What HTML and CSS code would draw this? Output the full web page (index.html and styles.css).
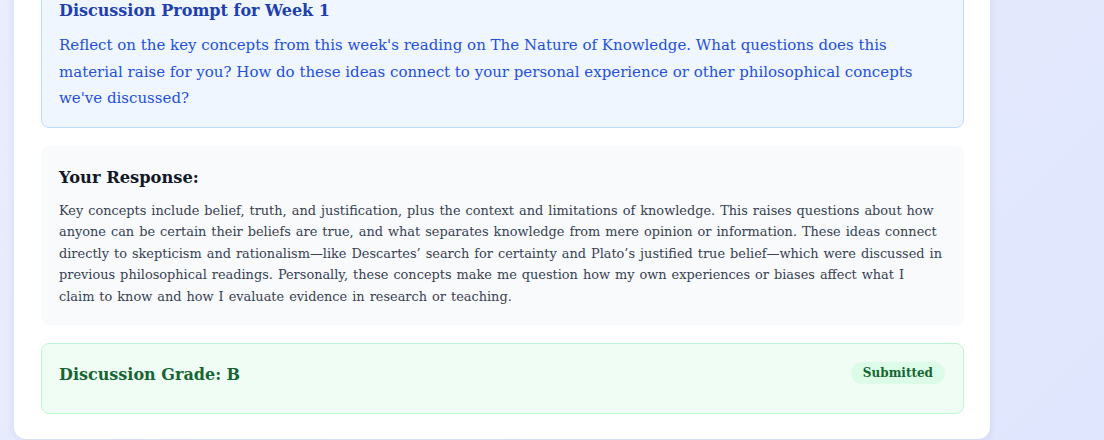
FILE: index.html
```html
<!DOCTYPE html>
<html lang="en">
<head>
<meta charset="utf-8">
<title>Discussion</title>
<link rel="stylesheet" href="styles.css">
</head>
<body>
<div class="page">
  <main class="card">
    <section class="prompt">
      <h2 class="prompt-title">Discussion Prompt for Week 1</h2>
      <p class="prompt-text">Reflect on the key concepts from this week's reading on The Nature of Knowledge. What questions does this material raise for you? How do these ideas connect to your personal experience or other philosophical concepts we've discussed?</p>
    </section>
    <section class="response">
      <h3 class="response-title">Your Response:</h3>
      <p class="response-text">Key concepts include belief, truth, and justification, plus the context and limitations of knowledge. This raises questions about how anyone can be certain their beliefs are true, and what separates knowledge from mere opinion or information. These ideas connect directly to skepticism and rationalism—like Descartes’ search for certainty and Plato’s justified true belief—which were discussed in previous philosophical readings. Personally, these concepts make me question how my own experiences or biases affect what I claim to know and how I evaluate evidence in research or teaching.</p>
    </section>
    <section class="grade">
      <h3 class="grade-title">Discussion Grade: B</h3>
      <span class="badge">Submitted</span>
    </section>
  </main>
</div>
</body>
</html>
```
FILE: styles.css
```css
* { box-sizing: border-box; }
html, body { margin: 0; padding: 0; }
body {
  width: 1104px;
  height: 440px;
  overflow: hidden;
  background: linear-gradient(135deg, #e9edfd 0%, #e0e6fd 100%);
  font-family: "DejaVu Serif", Georgia, serif;
}
.page {
  display: flex;
  padding: 0 114px 2px 14px;
}
.card {
  flex: 1;
  background: #ffffff;
  border-radius: 0 0 12px 12px;
  box-shadow: 0 2px 8px rgba(60, 70, 120, 0.10);
  padding: 0 26px 25px 27px;
  margin-top: -20px;
}
.prompt {
  background: #eff6ff;
  border: 1px solid #bfdbfe;
  border-radius: 8px;
  padding: 16px 17px 15px;
}
.prompt-title {
  margin: 0;
  font-size: 16px;
  line-height: 27px;
  font-weight: 700;
  color: #1e40af;
}
.prompt-text {
  margin: 8px 0 0;
  font-size: 15px;
  line-height: 26.5px;
  color: #2350dc;
}
.response {
  margin-top: 18px;
  background: #f8fafc;
  border-radius: 8px;
  padding: 19px 21px 18px 18px;
}
.response-title {
  margin: 0;
  font-size: 16.3px;
  line-height: 26px;
  font-weight: 700;
  color: #111827;
}
.response-text {
  margin: 9px 0 0;
  font-size: 12.9px;
  word-spacing: 0.9px;
  line-height: 21.5px;
  color: #374151;
}
.grade {
  margin-top: 18px;
  background: #f0fdf4;
  border: 1px solid #bbf7d0;
  border-radius: 8px;
  padding: 17px 18px 25px 17px;
  display: flex;
  justify-content: space-between;
  align-items: flex-start;
}
.grade-title {
  margin: 0;
  font-size: 16px;
  line-height: 27px;
  font-weight: 700;
  color: #166534;
}
.badge {
  margin-top: 1px;
  height: 22px;
  line-height: 22px;
  padding: 0 12px;
  border-radius: 11px;
  background: #dcfce7;
  color: #166534;
  font-size: 12px;
  font-weight: 700;
}
```
